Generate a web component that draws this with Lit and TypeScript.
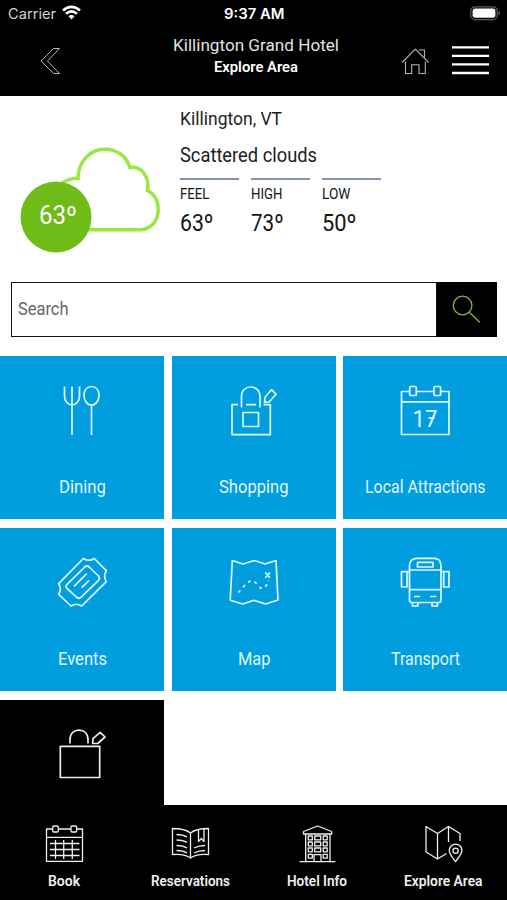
import { LitElement, html, css, svg, nothing } from "lit";
import { customElement, property } from "lit/decorators.js";

/* Condensed label: real text set to an exact width. */
@customElement("fit-text")
class FitText extends LitElement {
  @property() text = "";
  @property({ type: Number }) w = 50;
  @property({ type: Number }) size = 16;
  @property({ type: Number }) weight = 400;
  @property() family = "Roboto";

  static styles = css`
    :host { display: block; flex: none; }
    svg { display: block; overflow: visible; }
    text { fill: currentColor; }
  `;

  render() {
    const { w, size } = this;
    return html`<svg width=${w} height=${size} viewBox="0 0 ${w} ${size}">
      <text x="0" y=${size * 0.8} font-size=${size} font-weight=${this.weight}
        font-family="${this.family}, Roboto, sans-serif"
        textLength=${w} lengthAdjust="spacingAndGlyphs">${this.text}</text>
    </svg>`;
  }
}

const glyphs: Record<string, { box: string; w: number; h: number; body: unknown }> = {
  dining: { box: "57 383 50 55", w: 50, h: 55, body: svg`
    <path d="M64.500 386.500V396C64.500 401.500 68 405 72 405S79.500 401.500 79.500 396V386.500M72 386.500V435"/>
    <path d="M91.500 405C87 405 84 400.500 84 395.500C84 390 87 386.500 91.500 386.500S99 390 99 395.500C99 400.500 96 405 91.500 405V435"/>` },
  shopping: { box: "229 383 50 55", w: 50, h: 55, body: svg`
    <path d="M238 404.600H232V434.600H270.300V404.600H263.500M246 404.600H256"/>
    <path d="M241.500 407.500V396.500C241.500 390.500 245.500 387 250.700 387S260 390.500 260 396.500V407.500"/>
    <path d="M243 412.500H258.500V426.500H243ZM271.500 389.700L276 394.200L269 402L264.500 402.300L265 397.300Z"/>` },
  calendar: { box: "400 383 50 55", w: 50, h: 55, body: svg`
    <path d="M409.500 391.500H401.500V434.500H449V391.500H441M416.500 391.500H433.500M401.500 401.800H449"/>
    <rect x="409.700" y="386.500" width="6.600" height="9" rx="1"/><rect x="434" y="386.500" width="6.600" height="9" rx="1"/>
    <text class="num" x="412.500" y="427" textLength="25" lengthAdjust="spacingAndGlyphs">17</text>
    <path d="M428.500 418H434.500"/>` },
  ticket: { box: "57 555 50 55", w: 50, h: 55, body: svg`
    <path d="M83.300 558.500Q88.800 562 94.300 558.500L106.300 570.700Q103 576.200 106.300 581.700L81.700 606Q76.200 602.800 71 606L58.700 594.300Q62 589 58.700 583.700Z"/>
    <path d="M84.800 567Q87 565 89.200 567L98.500 576Q100.300 578.300 98.500 580.400L81.200 597.200Q78.800 599.300 76.500 597.200L67 588.500Q65 586.500 67 584.300Z"/>
    <path d="M74 586.300L86.700 573.700M81.700 587.700L89 580.300"/>` },
  map: { box: "229 555 50 55", w: 50, h: 55, body: svg`
    <path d="M232.300 560.500L243 564L254.300 560.500L265 564L276 560.500L278 600L265.700 604L254 600.300L242.700 604L230.200 600.300Z"/>
    <path d="M265.300 572.500L270 577.800M270 572.500L265.300 577.800"/>
    <path stroke-dasharray="3 4" d="M238.300 592.500L245 585Q252 577 257 584.500Q261 590 264 588Q267.500 585 268 580"/>` },
  bus: { box: "400 555 50 55", w: 50, h: 55, body: svg`
    <path d="M409.500 600V566C409.500 561 412.500 558.300 417 558.300H434C438.500 558.300 441 561 441 566V600Q441 602.500 438.500 602.500H412Q409.500 602.500 409.500 600Z"/>
    <path d="M417.500 562.300H433V567H417.500ZM409.500 570H441M409.500 589.700H441M414 596.500H420M430.300 596.500H436.300"/>
    <path d="M409.500 571.700H401.500V587H407V571.700M441 571.700H449V587H443.700V571.700M412.500 602.500V606H418V602.500M432 602.500V606H437.500V602.500"/>` },
  bag: { box: "57 726 50 55", w: 50, h: 55, body: svg`
    <path d="M60.300 746.300H99.700V777.500H60.300ZM70 743.500V740C70 733.500 74 730.200 79 730.200S88 733.500 88 740V743.500"/>
    <path d="M92.700 743.500L93 738.700L100.200 732.300L105 737L97.800 743.500Z"/>` },
  book: { box: "44 822 40 42", w: 40, h: 42, body: svg`
    <path d="M52.500 829H46.500V861.300H82.500V829H77M58.500 829H71M46.500 837.300H82.500M50 843.500H79.500M50 849.500H79.500M50 855.500H79.500M55.500 840V859M63.700 840V859M72.300 840V859"/>
    <rect x="52.700" y="826" width="5.600" height="6" rx="1"/><rect x="71" y="826" width="5.600" height="6" rx="1"/>` },
  reservations: { box: "170 822 40 42", w: 40, h: 42, body: svg`
    <path d="M172.500 828.500Q185 828.500 190.500 833Q196 828.500 208.500 828.500V854.500Q196 853.500 190.500 858Q185 853.500 172.500 854.500ZM190.500 833V857"/>
    <path d="M176.500 834.500Q183 834.500 187 837M176.500 840Q183 840 187 842.500M176.500 845.500Q183 845.500 187 848M176.500 850.500Q183 850.500 187 853M194 848Q199 845.500 205 845.500M194 853Q199 850.500 205 850.500M198.500 830V841.500L201.300 838.500L204 841.500V829"/>` },
  hotel: { box: "297 822 40 42", w: 40, h: 42, body: svg`
    <path d="M303.500 834V831.500L317.500 826L331.700 831.500V834ZM305.700 834V861.500M330 834V861.500M299.500 861.700H335.500M314 861.500V854.700H321V861.500"/>
    ${[836, 842, 848].map(y => svg`<path d="M308.300 ${y}h4v3.800h-4zM314.700 ${y}h6v3.800h-6zM323.200 ${y}h4v3.800h-4z"/>`)}
    <path d="M308.300 854.300h4v3.800h-4zM323.200 854.300h4v3.800h-4z"/>` },
  explore: { box: "423 822 40 42", w: 40, h: 42, body: svg`
    <path d="M446.500 853.500L437.500 859L426 852V826.500L437.500 833.500L448.500 826.500L460 833.500V841M437.500 833.500V859M448.500 826.500V842"/>
    <path d="M455.500 861.500C452 857 449.300 854 449.300 850.500A6.300 6.300 0 0 1 461.900 850.500C461.900 854 459 857 455.500 861.500Z"/>
    <circle cx="455.600" cy="850.700" r="2.600"/>` },
  back: { box: "40 47 22 28", w: 22, h: 28, body: svg`
    <path d="M53.500 48.500H59.500L47.500 61L59.500 73.500H53.500L41 61Z"/>` },
  home: { box: "401 47 29 28", w: 29, h: 28, body: svg`
    <path d="M402 62.500L415.300 49.200L428.600 62.500M418.500 50H424.500V57.500M405.500 61.500V73.500H411.700V64.700H419V73.500H425.300V61.500"/>` },
  search: { box: "451 294 31 31", w: 31, h: 31, body: svg`
    <circle cx="462.600" cy="305.500" r="9.300"/><path d="M469.300 312.300L480 322.500"/>` },
};

@customElement("line-icon")
class LineIcon extends LitElement {
  @property() name = "";
  static styles = css`
    :host { display: block; flex: none; }
    svg { display: block; fill: none; stroke: currentColor; stroke-width: var(--stroke, 1.7); stroke-linejoin: round; }
    .num { fill: currentColor; stroke: none; font: 400 24.500px Roboto, sans-serif; }
  `;
  render() {
    const g = glyphs[this.name];
    return g ? html`<svg width=${g.w} height=${g.h} viewBox=${g.box}>${g.body}</svg>` : nothing;
  }
}

const tiles = [
  { icon: "dining", label: "Dining", w: 47 },
  { icon: "shopping", label: "Shopping", w: 69.5 },
  { icon: "calendar", label: "Local Attractions", w: 120.5 },
  { icon: "ticket", label: "Events", w: 49 },
  { icon: "map", label: "Map", w: 32.5 },
  { icon: "bus", label: "Transport", w: 69 },
  { icon: "bag", label: "", w: 0 },
];

const tabs = [
  { icon: "book", label: "Book", w: 32 },
  { icon: "reservations", label: "Reservations", w: 79 },
  { icon: "hotel", label: "Hotel Info", w: 60 },
  { icon: "explore", label: "Explore Area", w: 78.5 },
];

const readings = [
  { name: "FEEL", nw: 29.5, value: "63º", vw: 33.5 },
  { name: "HIGH", nw: 31.5, value: "73º", vw: 32.5 },
  { name: "LOW", nw: 28.5, value: "50º", vw: 34.5 },
];

@customElement("app-root")
class AppRoot extends LitElement {
  static styles = css`
    :host { display: flex; flex-direction: column; height: 900px; width: 507px; background: #fff; overflow: hidden; font-family: Roboto, sans-serif; }
    * { box-sizing: border-box; }
    .top { flex: none; height: 96px; background: #000; color: #fff; }
    .status { display: grid; grid-template-columns: 1fr auto 1fr; height: 28px; align-items: start; padding: 8px 7px 0 8px; }
    .carrier { display: flex; gap: 6px; color: #d4d4d4; }
    .wifi { display: block; margin-top: -3px; }
    .battery { justify-self: end; margin: -2px -1px 0 0; display: block; }
    .bar { display: grid; grid-template-columns: 50px 1fr 90px; height: 68px; padding: 0 18px 0 40px; }
    .back { color: #b5b5b5; --stroke: 1; padding-top: 19px; }
    .titles { display: flex; flex-direction: column; align-items: center; padding: 10px 0 0 22.500px; }
    .sub { color: #e2e2e2; }
    .main { margin-top: 6px; }
    .right { display: flex; justify-content: flex-end; gap: 22px; padding-top: 18px; }
    .home { color: #b5b5b5; --stroke: 1.1; padding-top: 1px; }
    .menu { display: block; }
    .weather { flex: none; height: 186px; display: flex; padding: 14px 0 0 18px; color: #1c1c1e; }
    .sky { width: 162px; padding-top: 34px; }
    .sky svg { display: block; }
    .temp { font: 400 26px Roboto, sans-serif; fill: #fff; }
    .info { flex: 1; }
    .cond { margin-top: 17px; }
    .stats { display: flex; gap: 12px; margin: 12px 0 0 .4px; }
    .stat { width: 59px; border-top: 2.500px solid #8495a8; padding-top: 7px; color: #151515; }
    .val { margin-top: 10px; }
    .search { flex: none; height: 55px; margin: 0 10px 0 11px; display: flex; }
    .field { flex: 1; border: 1.500px solid #111; padding: 17px 0 0 6px; color: #666; }
    .go { width: 60.500px; background: #000; color: #86b63f; --stroke: 1.300; display: flex; padding: 12px 0 0 14.500px; }
    .grid { flex: 1; min-height: 0; overflow: hidden; display: grid; grid-template-columns: 164.400px 163.500px 163.500px; grid-auto-rows: 163px; gap: 8.700px 7.800px; padding-top: 19.400px; align-content: start; }
    .tile { background: #009ddf; color: #e0f7ff; display: flex; flex-direction: column; align-items: center; gap: 40px; padding-top: 26.500px; }
    .tile.dark { background: #000; color: #ececec; }
    .nav { flex: none; height: 95px; background: #000; color: #f0f0f0; display: grid; grid-template-columns: repeat(4, 126.600px); padding-left: .4px; --stroke: 1.300; }
    .tab { display: flex; flex-direction: column; align-items: center; gap: 9.500px; padding-top: 17px; }
  `;

  render() {
    return html`
      <header class="top">
        <div class="status">
          <div class="carrier">
            <fit-text text="Carrier" w="48" size="14" family="Inter"></fit-text>
            <svg class="wifi" width="19" height="15" viewBox="0 0 19 15" fill="none" stroke="#fff" stroke-width="2.500">
              <path d="M1 5.500Q9.500 -1.800 18 5.500M4 8.800Q9.500 4 15 8.800"/>
              <path d="M6.500 11.300Q9.500 8.700 12.500 11.300L9.500 14.400Z" fill="#fff" stroke="none"/>
            </svg>
          </div>
          <fit-text class="clock" text="9:37 AM" w="60.500" size="14" weight="600" family="Inter"></fit-text>
          <svg class="battery" width="31" height="15" viewBox="0 0 31 15">
            <rect x=".800" y=".800" width="26.400" height="12.800" rx="4" fill="none" stroke="#5c5c5c" stroke-width="1.200"/>
            <rect x="2.600" y="2.600" width="22.800" height="9.200" rx="2.500" fill="#fff"/>
            <path d="M28.500 5Q31.200 7.200 28.500 9.500Z" fill="#6a6a6a"/>
          </svg>
        </div>
        <div class="bar">
          <div class="back"><line-icon name="back"></line-icon></div>
          <div class="titles">
            <fit-text class="sub" text="Killington Grand Hotel" w="166" size="16.3"></fit-text>
            <fit-text class="main" text="Explore Area" w="84" size="15.3" weight="600"></fit-text>
          </div>
          <div class="right">
            <div class="home"><line-icon name="home"></line-icon></div>
            <svg class="menu" width="37" height="30" viewBox="0 0 37 30">
              <path d="M0 1.300H37M0 9.900H37M0 18.400H37M0 27H37" stroke="#fff" stroke-width="2.300"/>
            </svg>
          </div>
        </div>
      </header>
      <section class="weather">
        <div class="sky">
          <svg width="145" height="110" viewBox="18 144 145 110">
            <path d="M62 183Q69 178.500 78 178.300C78 162 90 149.200 104.500 149.200C117 149.200 126 156 130 167.500C141 166 150 176 147.500 190.500C154.500 194 158.200 201.500 158.200 210C158.200 221 150.500 229.700 140 229.700H80" fill="none" stroke="#97e83f" stroke-width="3.500"/>
            <circle cx="56" cy="217" r="35.500" fill="#6fbb17"/>
            <text class="temp" x="39" y="224" textLength="38" lengthAdjust="spacingAndGlyphs">63º</text>
          </svg>
        </div>
        <div class="info">
          <fit-text text="Killington, VT" w="102" size="18.800"></fit-text>
          <fit-text class="cond" text="Scattered clouds" w="137" size="20"></fit-text>
          <div class="stats">
            ${readings.map(r => html`<div class="stat">
              <fit-text text=${r.name} w=${r.nw} size="15"></fit-text>
              <fit-text class="val" text=${r.value} w=${r.vw} size="23.500"></fit-text>
            </div>`)}
          </div>
        </div>
      </section>
      <div class="search">
        <div class="field"><fit-text text="Search" w="50.500" size="18.500"></fit-text></div>
        <div class="go"><line-icon name="search"></line-icon></div>
      </div>
      <main class="grid">
        ${tiles.map(t => html`<div class="tile ${t.label ? "" : "dark"}">
          <line-icon name=${t.icon}></line-icon>
          ${t.label ? html`<fit-text text=${t.label} w=${t.w} size="18.300"></fit-text>` : nothing}
        </div>`)}
      </main>
      <nav class="nav">
        ${tabs.map(t => html`<div class="tab">
          <line-icon name=${t.icon}></line-icon>
          <fit-text text=${t.label} w=${t.w} size="14.500" weight="600"></fit-text>
        </div>`)}
      </nav>
    `;
  }
}
